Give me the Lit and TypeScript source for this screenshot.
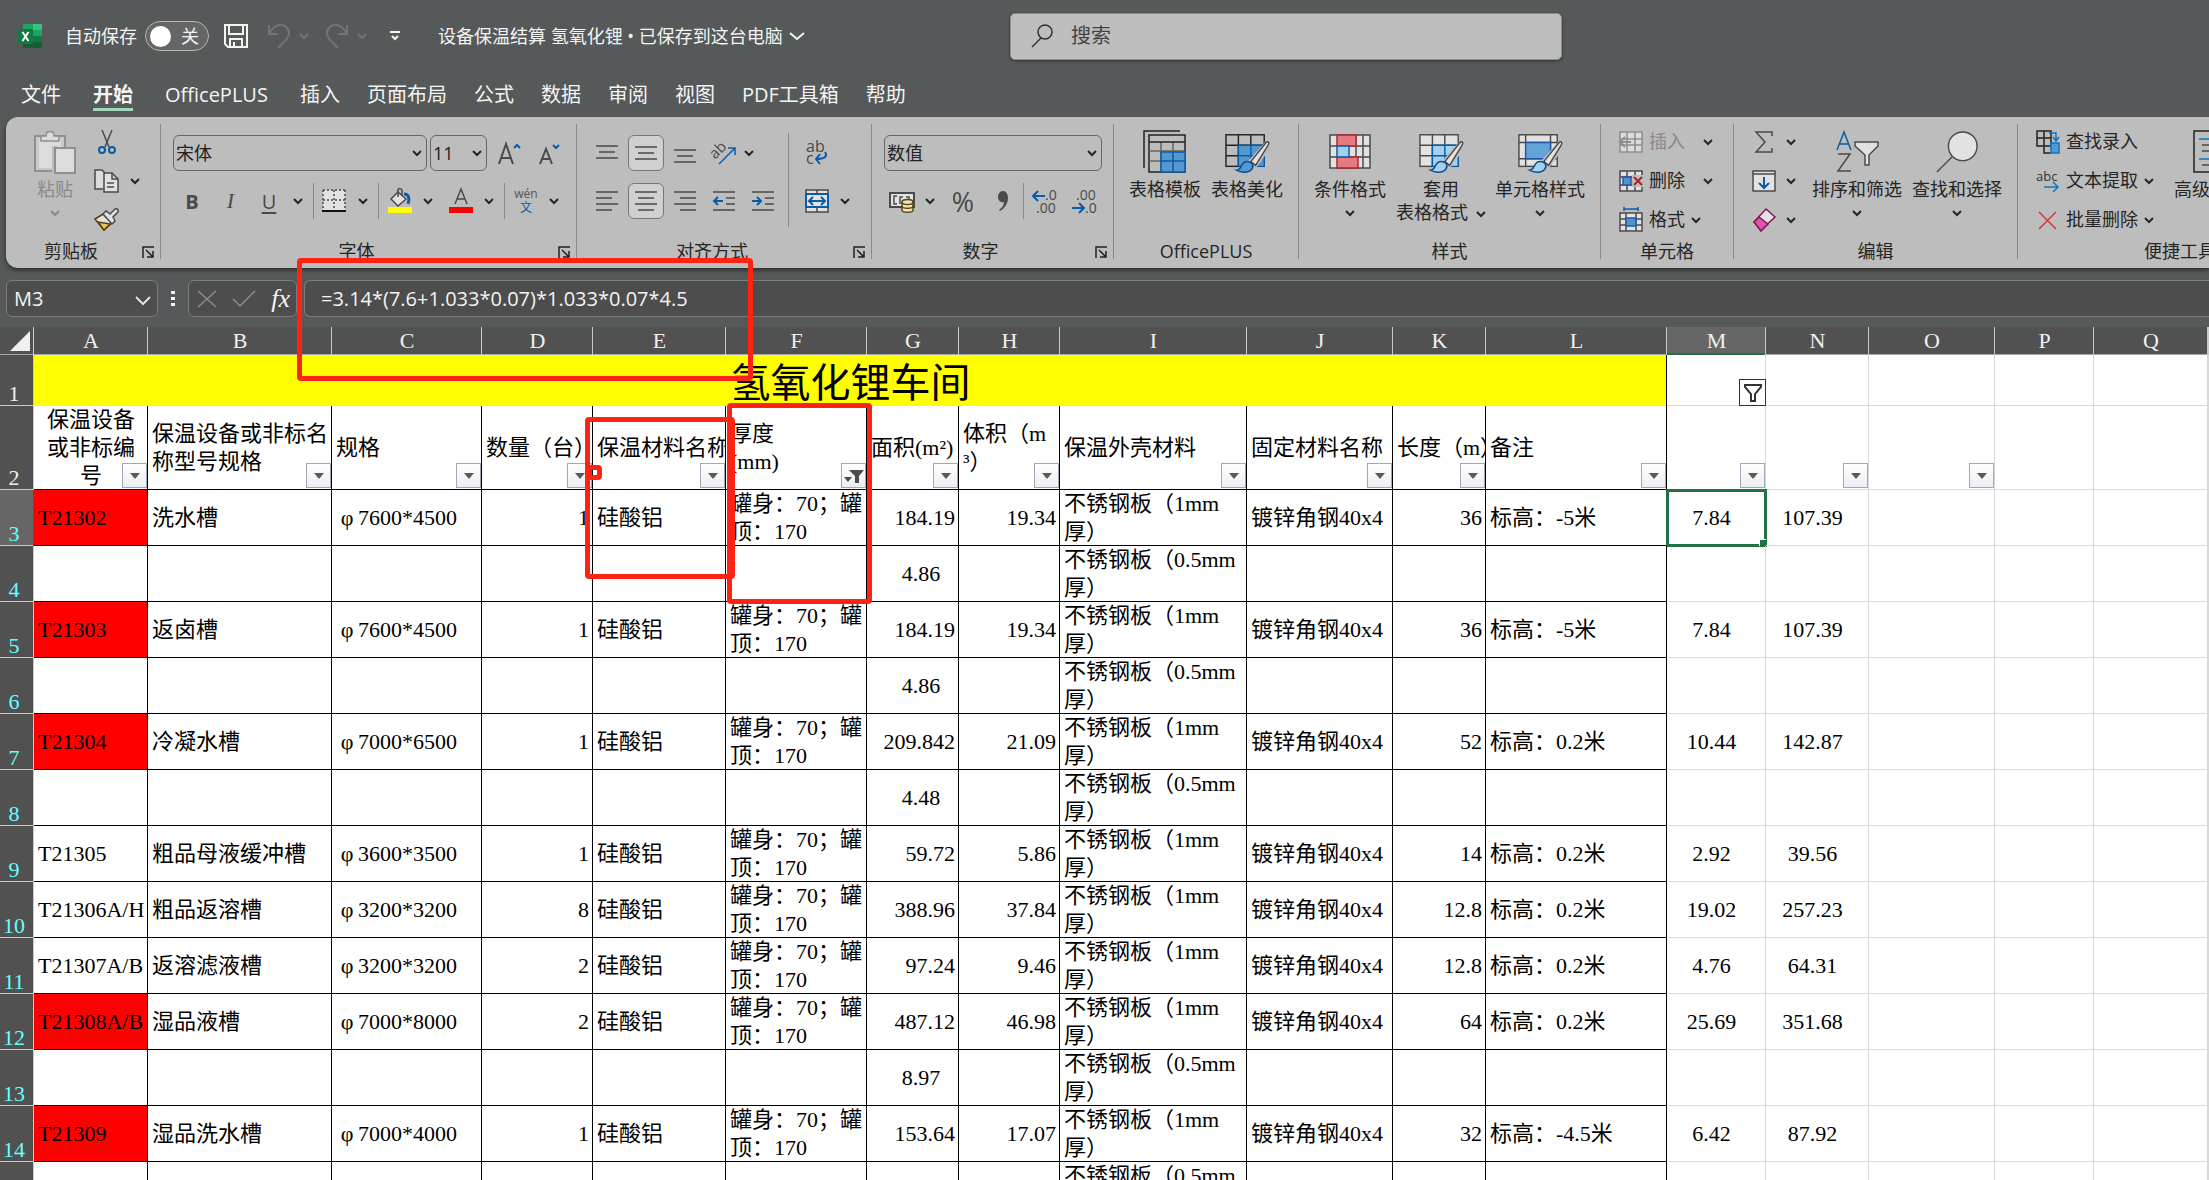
import { LitElement, html, css, svg, nothing } from "lit";
import { customElement } from "lit/decorators.js";
import { classMap } from "lit/directives/class-map.js";

const chev = html`<svg class="chev" width="10" height="6" viewBox="0 0 10 6" aria-hidden="true"><path d="M1 1l4 4 4-4" fill="none" stroke="currentColor" stroke-width="2"/></svg>`;

const icon = (w: number, h: number, body: unknown) =>
  html`<svg width=${w} height=${h} viewBox="0 0 ${w} ${h}" fill="none" stroke="#4a4a4a" stroke-width="1.5" aria-hidden="true">${body}</svg>`;

const lines = (rows: number[][]) => svg`${rows.map(([x1, x2, y]) => svg`<path d="M${x1} ${y}H${x2}"/>`)}`;

const brush = (fill: string) => svg`
  <path d="M45 13L26 34l4 5 15-21z" stroke="#bdbdbd" stroke-width="5"/>
  <path d="M43 13c2-2 4 0 2 3L32 37l-5-4z" fill="#e2e2e2"/>
  <path d="M12 42c6 0 4-9 11-9 5 0 8 4 5 8-3 4-11 4-16 1z" fill=${fill} stroke="#0a4f8c"/>`;

const grid42 = (fill: string, stroke: string) => svg`
  <rect x="1" y="5" width="40" height="33" fill=${fill} stroke=${stroke}/>
  <path d="M14 5v33M27 5v33M1 16h40M1 27h40" stroke=${stroke}/>`;

const I = {
  logo: html`<svg width="24" height="24" viewBox="0 0 24 24" aria-hidden="true">
    <path d="M5 0h10v12H5z" fill="#21a366"/><path d="M15 0h8a1 1 0 0 1 1 1v5h-9z" fill="#33c481"/>
    <path d="M5 6h10v6H5z" fill="#107c41"/><path d="M15 6h9v6h-9z" fill="#21a366"/>
    <path d="M5 12h10v12H5z" fill="#185c37"/><path d="M15 12h9v6h-9z" fill="#107c41"/><path d="M15 18h9v6h-9z" fill="#185c37"/>
    <rect x="0" y="5" width="15" height="15" rx="1" fill="#107c41"/>
    <path d="M4.500 8l6 9M10.500 8l-6 9" stroke="#fff" stroke-width="2"/></svg>`,
  save: html`<svg width="24" height="24" viewBox="0 0 24 24" fill="none" stroke="#f4f4f4" stroke-width="2" aria-hidden="true"><path d="M1 1h22v22H4l-3-3zM5 1v9h14V1M6 23v-8h12v8M10 18v5"/></svg>`,
  undo: html`<svg width="22" height="26" viewBox="0 0 22 26" fill="none" stroke="#717575" stroke-width="2" aria-hidden="true"><path d="M1 2v9h9M1 11C4 5 8 2 13 2c5 0 8 4 8 8 0 5-4 8-11 15"/></svg>`,
  redo: html`<svg width="22" height="26" viewBox="0 0 22 26" fill="none" stroke="#717575" stroke-width="2" aria-hidden="true"><path d="M21 2v9h-9M21 11C18 5 14 2 9 2c-5 0-8 4-8 8 0 5 4 8 11 15"/></svg>`,
  custom: html`<svg width="12" height="10" viewBox="0 0 12 10" fill="none" stroke="#f4f4f4" stroke-width="2" aria-hidden="true"><path d="M1 1h10M3 5l3 3 3-3"/></svg>`,
  wide: html`<svg width="16" height="9" viewBox="0 0 16 9" fill="none" stroke="#f4f4f4" stroke-width="2" aria-hidden="true"><path d="M1 1l7 6 7-6"/></svg>`,
  search: html`<svg width="22" height="24" viewBox="0 0 22 24" fill="none" stroke="#333" stroke-width="1.500" aria-hidden="true"><circle cx="14" cy="8" r="7"/><path d="M10 14l-9 9"/></svg>`,
  paste: icon(42, 44, svg`<g stroke="#8f8f8f" fill="#dcdcdc"><path d="M1 6h30v35H1z" fill="#c9c9c9" stroke-width="2"/><path d="M5 9h22v29H5z" stroke="none"/><path d="M7 11V6h5c0-6 8-6 8 0h5v5z"/><path d="M18 16h6v28h-6z" fill="#bdbdbd" stroke="none"/><path d="M21 18h20v25H21z" stroke-width="2"/></g>`),
  cut: icon(18, 24, svg`<path d="M4 0l7 17M14 0L7 17"/><circle cx="4" cy="20" r="3" stroke="#0a5ca8" stroke-width="2"/><circle cx="14" cy="20" r="3" stroke="#0a5ca8" stroke-width="2"/>`),
  copy: icon(26, 24, svg`<path d="M9 20H1V1h7l3 3" fill="#dcdcdc"/><path d="M10 4h8l6 6v13H10z" fill="#e2e2e2"/><path d="M18 4v6h6M13 14h7M13 18h7"/>`),
  painter: icon(26, 24, svg`<path d="M1 11l9 11 8-7-9-9z" fill="#e2e2e2" stroke="#5a4210"/><path d="M4 14l6 8 6-6z" fill="#f2c25a" stroke="#5a4210"/><path d="M9 6l3-3 4 3 5-5c2-1 4 1 3 3l-5 5 2 4-3 3z" fill="#e2e2e2"/>`),
  growA: icon(24, 24, svg`<path d="M2 23L9 3l7 20M4 17h10" stroke-width="2"/><path d="M17 7l3-3 3 3" stroke="#0a5ca8" stroke-width="2"/>`),
  shrinkA: icon(22, 24, svg`<path d="M2 23L8 8l6 15M4 18h8" stroke-width="2"/><path d="M15 4l3 3 3-3" stroke="#0a5ca8" stroke-width="2"/>`),
  border: icon(24, 24, svg`<path d="M1 1h22v20H1z" fill="#e2e2e2" stroke="none"/><path d="M1 1h22M1 1v20M23 1v20M12 1v20M1 11h22" stroke-dasharray="2 2"/><path d="M0 22h24" stroke="#111" stroke-width="2"/>`),
  fill: icon(26, 26, svg`<path d="M4 11l7-7 8 7-8 7z" fill="#e2e2e2"/><path d="M11 9V2c0-2 4-2 4 1v5"/><path d="M17 6c5 0 6 5 4 10" stroke="#0a5ca8" stroke-width="3"/><path d="M1 19h24v6H1z" fill="#ffff00" stroke="none"/>`),
  color: icon(26, 26, svg`<path d="M7 16l6-15 6 15M9 11h8"/><path d="M1 19h24v6H1z" fill="#ff0000" stroke="none"/>`),
  alTop: icon(22, 20, lines([[0, 22, 3], [3, 19, 9], [0, 22, 15]])),
  alMid: icon(22, 20, lines([[0, 22, 4], [3, 19, 10], [0, 22, 16]])),
  alBot: icon(22, 20, lines([[0, 22, 7], [3, 19, 13], [0, 22, 19]])),
  alL: icon(22, 22, lines([[0, 22, 2], [0, 16, 8], [0, 22, 14], [0, 16, 20]])),
  alC: icon(22, 22, lines([[0, 22, 2], [3, 19, 8], [0, 22, 14], [3, 19, 20]])),
  alR: icon(22, 22, lines([[0, 22, 2], [6, 22, 8], [0, 22, 14], [6, 22, 20]])),
  outd: icon(22, 22, svg`${lines([[0, 22, 2], [13, 22, 8], [13, 22, 14], [0, 22, 20]])}<path d="M10 11H1M5 7l-4 4 4 4" stroke="#0a5ca8" stroke-width="2"/>`),
  ind: icon(22, 22, svg`${lines([[0, 22, 2], [13, 22, 8], [13, 22, 14], [0, 22, 20]])}<path d="M0 11h9M5 7l4 4-4 4" stroke="#0a5ca8" stroke-width="2"/>`),
  orient: icon(26, 26, svg`<text x="2" y="19" transform="rotate(-45 4 17)" font-family="Open Sans" font-size="15" fill="#4a4a4a" stroke="none">ab</text><path d="M8 24L24 8M17 8h7v7" stroke="#0a5ca8"/>`),
  wrap: icon(24, 26, svg`<text x="1" y="12" font-family="Open Sans" font-size="16" fill="#4a4a4a" stroke="none">ab</text><text x="1" y="24" font-family="Open Sans" font-size="16" fill="#4a4a4a" stroke="none">c</text><path d="M20 12c3 5-1 7-9 7M15 14l-4 5 4 5" stroke="#0a5ca8" stroke-width="2"/>`),
  merge: icon(24, 24, svg`<path d="M1 1h22v22H1zM12 1v5M12 18v5" fill="#e2e2e2"/><path d="M1 5h22v13H1z" fill="#e2e2e2" stroke="#0a5ca8" stroke-width="2"/><path d="M4 12h16M8 8l-4 4 4 4M16 8l4 4-4 4" stroke="#0a5ca8" stroke-width="2"/>`),
  money: icon(26, 24, svg`<path d="M1 4h24v14H1z" fill="#e2e2e2" stroke-width="2"/><path d="M8 7H5v8h3M11 15V8h3M17 8h3v4"/><path d="M13 13v8c0 3 11 3 11 0v-8" fill="#f0e2c0" stroke="#5a4510"/><ellipse cx="18.500" cy="13" rx="5.500" ry="2.500" fill="#f0e2c0" stroke="#5a4510"/><path d="M13 17c0 3 11 3 11 0" stroke="#5a4510"/>`),
  comma: icon(12, 22, svg`<path d="M6 1c3 0 5 3 5 7 0 6-4 11-8 13l-1-1c3-2 5-5 5-8-4 1-6-2-6-5s2-6 5-6z" fill="#4a4a4a" stroke="none"/>`),
  inc: icon(26, 26, svg`<text x="14" y="12" font-family="Open Sans" font-size="14" fill="#4a4a4a" stroke="none">.0</text><text x="5" y="25" font-family="Open Sans" font-size="14" fill="#4a4a4a" stroke="none">.00</text><path d="M14 8H2M7 3L2 8l5 5" stroke="#0a5ca8" stroke-width="2"/>`),
  dec: icon(26, 26, svg`<text x="5" y="12" font-family="Open Sans" font-size="14" fill="#4a4a4a" stroke="none">.00</text><text x="14" y="25" font-family="Open Sans" font-size="14" fill="#4a4a4a" stroke="none">.0</text><path d="M1 20h12M8 15l5 5-5 5" stroke="#0a5ca8" stroke-width="2"/>`),
  tmpl: icon(44, 44, svg`<path d="M1 38V1h36" stroke="#222"/><path d="M6 5h36v37H6z" stroke="#222"/><path d="M18 12v30M30 12v30M6 21h36M6 31h36" stroke="#6a625c"/><path d="M6 12h36" stroke="#222"/><path d="M18 22h24v20H18z" fill="#5597cf" stroke="#0a5ca8"/><path d="M30 22v20M18 31h24" stroke="#0a5ca8"/>`),
  beaut: icon(46, 46, svg`${grid42("none", "#222")}<path d="M14 16h27v22H14z" fill="#5597cf" stroke="#0a5ca8"/><path d="M27 16v22M14 27h27" stroke="#0a5ca8"/>${brush("#5597cf")}`),
  cond: icon(42, 44, svg`<g>${grid42("#e2e2e2", "#4a4a4a")}<path d="M34 5v33" /><path d="M8 5h19v11H8zM8 27h21v11H8z" fill="#e47b80" stroke="#a8282e"/><path d="M8 16h12v11H8z" fill="#a4d0f2" stroke="#0a5ca8"/></g>`),
  tfmt: icon(46, 46, svg`${grid42("#e2e2e2", "#4a4a4a")}<path d="M14 16h27v22H14z" fill="#a4d0f2" stroke="#0a5ca8"/><path d="M27 16v22M14 27h27" stroke="#0a5ca8"/>${brush("#a4d0f2")}`),
  cstyle: icon(46, 46, svg`<rect x="1" y="5" width="40" height="33" fill="#e2e2e2"/><path d="M8 5v33M34 5v33M1 13h40M1 30h40"/><path d="M8 13h26v17H8z" fill="#62a3d8" stroke="#2a55a8"/>${brush("#a4d0f2")}`),
  ins: icon(24, 24, svg`<g stroke="#8e8e8e"><path d="M1 2h22v20H1zM8 2v20M16 2v20M1 9h22M1 15h22" fill="#dcdcdc"/><path d="M0 12h12M6 7l-5 5 5 5" stroke-width="2"/></g>`),
  del: icon(24, 24, svg`<path d="M1 2h22v20H1zM8 2v20M16 2v20M1 8h22M1 16h22" fill="#e2e2e2"/><path d="M4 8h8v8H4z" fill="#4f94cf" stroke="#2a55a8"/><path d="M13 6h11v12H13z" fill="#bdbdbd" stroke="none"/><path d="M15 8l8 8M23 8l-8 8" stroke="#b02020" stroke-width="2"/>`),
  fmt: icon(24, 26, svg`<path d="M1 6h22v18H1zM7 6v18M17 6v18M1 12h22M1 18h22" fill="#e2e2e2"/><path d="M7 11h10v8H7z" fill="#4f94cf" stroke="#2a55a8"/><path d="M5 2h14M5 0v4M19 0v4" stroke="#0a5ca8"/>`),
  sum: icon(24, 24, svg`<path d="M20 6V2H4l9 10-9 10h16v-4"/>`),
  down: icon(24, 24, svg`<path d="M1 2h22v20H1z" fill="#e2e2e2"/><path d="M1 5h22"/><path d="M12 8v11M7 14l5 5 5-5" stroke="#0a5ca8" stroke-width="2"/>`),
  erase: icon(24, 26, svg`<path d="M2 15L14 2l9 8L9 23z" fill="#e6e0e4" stroke="#7d1a55"/><path d="M2 15l5-5 9 7-7 7z" fill="#dd55aa" stroke="#7d1a55"/>`),
  sort: icon(44, 44, svg`<path d="M2 20L9 2l7 18M4 14h10" stroke="#0a5ca8"/><path d="M3 24h12L3 41h13"/><path d="M20 12h23v4l-9 9v10h-4V25l-10-9z" fill="#e2e2e2"/>`),
  find: icon(46, 46, svg`<circle cx="29" cy="17" r="15" fill="#e2e2e2"/><path d="M18 28L2 44"/>`),
  lookup: icon(24, 24, svg`<path d="M1 1h14v15H1zM8 1v15M1 8h14M8 16v7h7" stroke="#222"/><path d="M13 3h7v7M17 7l3 4 3-4" stroke="#0a77c8"/><path d="M15 13h8v10h-8z" fill="#5597cf" stroke="#0a77c8"/>`),
  text: icon(24, 24, svg`<text x="0" y="12" font-family="Open Sans" font-size="13" fill="#333" stroke="none">abc</text><path d="M8 18h14M17 13l5 5-5 5" stroke="#0a77c8"/>`),
  batch: icon(24, 24, svg`<path d="M3 4l17 17M20 4L3 21" stroke="#e03030"/>`),
  adv: icon(44, 44, svg`<path d="M1 1h30v41H1z" stroke="#222"/><path d="M6 9h20M6 29h20" stroke="#0a77c8"/><path d="M9 15h18M9 21h18M9 35h18"/>`),
  launch: icon(12, 12, svg`<path d="M1 12V1h11" stroke="#222"/><path d="M4 4l7 7M11 5v6H5" stroke="#222"/>`),
};

type Row = { n: number; a: string; red?: boolean; b?: string; c?: string; d?: string; g: string; h?: string; i: string; k?: string; l?: string; m?: string; nn?: string };
const sub = (n: number, g: string): Row => ({ n, a: "", g, i: "不锈钢板（0.5mm\n厚）" });
const main = (n: number, a: string, red: boolean, b: string, c: string, d: string, g: string, h: string, k: string, l: string, m: string, nn: string): Row =>
  ({ n, a, red, b, c, d, g, h, i: "不锈钢板（1mm\n厚）", k, l: "标高：" + l + "米", m, nn });

const ROWS: Row[] = [
  main(3, "T21302", true, "洗水槽", "7600*4500", "1", "184.19", "19.34", "36", "-5", "7.84", "107.39"),
  sub(4, "4.86"),
  main(5, "T21303", true, "返卤槽", "7600*4500", "1", "184.19", "19.34", "36", "-5", "7.84", "107.39"),
  sub(6, "4.86"),
  main(7, "T21304", true, "冷凝水槽", "7000*6500", "1", "209.842", "21.09", "52", "0.2", "10.44", "142.87"),
  sub(8, "4.48"),
  main(9, "T21305", false, "粗品母液缓冲槽", "3600*3500", "1", "59.72", "5.86", "14", "0.2", "2.92", "39.56"),
  main(10, "T21306A/H", false, "粗品返溶槽", "3200*3200", "8", "388.96", "37.84", "12.8", "0.2", "19.02", "257.23"),
  main(11, "T21307A/B", false, "返溶滤液槽", "3200*3200", "2", "97.24", "9.46", "12.8", "0.2", "4.76", "64.31"),
  main(12, "T21308A/B", true, "湿品液槽", "7000*8000", "2", "487.12", "46.98", "64", "0.2", "25.69", "351.68"),
  sub(13, "8.97"),
  main(14, "T21309", true, "湿品洗水槽", "7000*4000", "1", "153.64", "17.07", "32", "-4.5", "6.42", "87.92"),
  sub(15, ""),
];

const HEADS = ["保温设备\n或非标编\n号", "保温设备或非标名\n称型号规格", "规格", "数量（台）", "保温材料名称", "厚度\n(mm)", "面积(m²)", "体积（m\n³）", "保温外壳材料", "固定材料名称", "长度（m）", "备注"];
const COLS = "ABCDEFGHIJKLMNOPQ".split("");
const WIDTHS = [34, 114, 184, 150, 111, 133, 141, 92, 101, 187, 146, 93, 181, 99, 103, 126, 99, 114];

@customElement("xl-titlebar")
class XlTitlebar extends LitElement {
  static styles = css`
    :host { display: block; color: #f4f4f4; font: 18px/24px "Open Sans", "Noto Sans CJK SC", sans-serif; }
    button { all: unset; display: flex; align-items: center; cursor: pointer; }
    .bar { display: grid; grid-template-columns: 1010px 552px 1fr; align-items: center; height: 72px; }
    .left { display: flex; align-items: center; padding-left: 18px; }
    .auto { display: flex; align-items: center; gap: 8px; margin-left: 23px; }
    .switch { display: flex; align-items: center; gap: 10px; width: 64px; height: 30px; box-sizing: border-box; border: 1px solid #b4b4b4; border-radius: 15px; background: #666; padding-left: 4px; }
    .knob { width: 21px; height: 21px; border-radius: 50%; background: #fff; }
    .save { margin-left: 15px; }
    .undo { margin-left: 20px; gap: 9px; color: #717575; }
    .redo { margin-left: 17px; gap: 9px; color: #717575; }
    .custom { margin-left: 22px; }
    .doc { margin-left: 37px; gap: 6px; white-space: nowrap; }
    .search { display: flex; align-items: center; gap: 18px; height: 47px; box-sizing: border-box; padding-left: 20px; background: #bebebe; border: 1px solid #8e8e8e; border-radius: 5px; box-shadow: 0 1px 3px #333; }
    .search input { all: unset; flex: 1; color: #333; font-size: 20px; }
    .search input::placeholder { color: #444; opacity: 1; }
    .tabs { display: flex; gap: 27px; height: 45px; padding: 10px 0 0 21px; box-sizing: border-box; font-size: 20px; line-height: 26px; }
    .tab { border-bottom: 3px solid transparent; height: 26px; white-space: nowrap; }
    .wide { margin-right: 5px; }
    .on { font-weight: 700; border-color: #a3d9bb; }
  `;
  render() {
    const tabs = ["文件", "开始", "OfficePLUS", "插入", "页面布局", "公式", "数据", "审阅", "视图", "PDF工具箱", "帮助"];
    return html`
      <header class="bar">
        <div class="left">
          ${I.logo}
          <div class="auto"><span id="as">自动保存</span>
            <button class="switch" role="switch" aria-checked="false" aria-labelledby="as"><span class="knob"></span>关</button></div>
          <button class="save" aria-label="保存">${I.save}</button>
          <button class="undo" aria-label="撤消">${I.undo}${chev}</button>
          <button class="redo" aria-label="恢复">${I.redo}${chev}</button>
          <button class="custom" aria-label="自定义">${I.custom}</button>
          <button class="doc">设备保温结算 氢氧化锂 • 已保存到这台电脑${I.wide}</button>
        </div>
        <label class="search">${I.search}<input type="text" placeholder="搜索" aria-label="搜索"></label>
      </header>
      <nav class="tabs">${tabs.map((t, i) => html`<button class=${classMap({ tab: true, wide: i < 3, on: i === 1 })}>${t}</button>`)}</nav>`;
  }
}

@customElement("xl-ribbon")
class XlRibbon extends LitElement {
  static styles = css`
    :host { display: block; padding-left: 6px; overflow: hidden; height: 159px; margin-bottom: -8px; color: #262626; font: 18px/23px "Open Sans", "Noto Sans CJK SC", sans-serif; }
    button { all: unset; display: flex; align-items: center; justify-content: center; cursor: pointer; white-space: nowrap; }
    svg { flex: none; overflow: visible; }
    .ribbon { display: flex; height: 151px; background: #bdbdbd; border-radius: 12px 0 0 12px; box-shadow: 0 2px 4px #2a2a2a; overflow: hidden; }
    .rule { flex: none; width: 1px; background: #8a8a8a; margin: 7px 0 9px; }
    .group { flex: none; display: flex; flex-direction: column; box-sizing: border-box; padding-bottom: 5px; }
    .body { display: flex; height: 122px; }
    .foot { display: grid; grid-template-columns: 1fr; height: 24px; align-items: center; text-align: center; }
    .foot.has { grid-template-columns: 1fr 24px; }
    .foot span { white-space: nowrap; }
    .foot svg { margin-top: 2px; }
    .clip { width: 154px; } .font { width: 415px; } .align { width: 294px; } .num { width: 241px; } .plus { width: 184px; }
    .style { width: 301px; } .cells { width: 132px; } .edit { width: 283px; } .quick { width: 324px; }
    .two { display: grid; grid-template-rows: 36px 36px; row-gap: 12px; padding-top: 18px; align-content: start; }
    .three { display: grid; grid-template-rows: 39px 39px 39px; padding-top: 5px; align-content: start; justify-items: start; }
    .line { display: grid; justify-items: center; align-items: center; }
    .mini { background: #8a8a8a; width: 1px; height: 36px; }
    .tall { background: #8a8a8a; width: 1px; height: 94px; margin: 16px 0 0 6px; }
    .drop { display: flex; align-items: center; box-sizing: border-box; height: 36px; border: 1px solid #666; border-radius: 6px; padding: 0 4px 0 2px; width: 100%; }
    .drop select { all: unset; flex: 1; min-width: 0; color: #222; }
    .sel { background: #d0d0d0; border: 1px solid #777; border-radius: 6px; width: 34px; height: 34px; }
    .big { flex-direction: column; justify-content: flex-start; padding-top: 13px; text-align: center; }
    .big > svg:first-child { margin-bottom: 4px; height: 44px; }
    .big .chev { margin-top: 9px; }
    .big span .chev { margin: 0 0 2px 8px; }
    .dim { color: #8a8a8a; }
    .clip .big { width: 74px; padding-left: 12px; }
    .clip .three .line { grid-template-columns: 30px 26px; }
    .font .two { padding-left: 12px; }
    .f1 { grid-template-columns: 254px 57px 38px 36px; column-gap: 3px; justify-content: start; }
    .f2 { grid-template-columns: 38px 39px 38px 20px 10px 32px 26px 4px 40px 16px 49px 8px 23px 20px 36px; }
    .b { font-weight: 700; font-size: 20px; color: #4a4a4a; } .i { font: italic 22px "Liberation Serif", serif; color: #4a4a4a; } .u { text-decoration: underline; font-size: 20px; color: #4a4a4a; text-underline-offset: 3px; }
    .py { display: flex; flex-direction: column; align-items: center; font-size: 12px; line-height: 14px; color: #555; } .py b { font-weight: 400; color: #0a5ca8; }
    .align .two { padding-left: 11px; }
    .a1 { grid-template-columns: 38px 39px 39px 40px 10px; } .a2 { grid-template-columns: 38px 39px 39px 40px 38px; }
    .align .wrapm { padding-left: 13px; } .wrapm .line { grid-template-columns: 30px 26px; }
    .num .two { padding-left: 12px; } .n1 { grid-template-columns: 218px; } .n2 { grid-template-columns: 36px 20px 46px 33px 9px 32px 47px; }
    .pct { font-size: 27px; color: #4a4a4a; }
    .plus .body { padding-left: 10px; } .plus .big { width: 82px; }
    .style .body { padding-left: 11px; } .w80 { width: 80px; } .w102 { width: 102px; } .w96 { width: 96px; }
    .cells .three, .edit .three, .quick .three { padding-left: 18px; }
    .row { gap: 6px; } .row .far { margin-left: 12px; display: flex; } .blk { color: #262626; }
    .edit .three { width: 59px; } .edit .row { gap: 10px; } .w92 { width: 92px; } .w108 { width: 108px; }
    .quick .three { width: 138px; } .adv { align-items: flex-start; } .adv > svg:first-child { margin-left: 19px; }
  `;
  private group(cls: string, label: string, body: unknown, launcher = false) {
    return html`<section class="group ${cls}"><div class="body">${body}</div>
      <div class=${launcher ? "foot has" : "foot"}><span>${label}</span>${launcher ? html`<button aria-label="${label}设置">${I.launch}</button>` : nothing}</div></section>`;
  }
  private ib(ic: unknown, label: string, cls = "") {
    return html`<button class=${cls} aria-label=${label}>${ic}</button>`;
  }
  render() {
    const c = (l = "更多") => this.ib(chev, l);
    const bar = html`<span class="rule"></span>`;
    const mini = html`<span class="mini"></span>`;
    return html`<div class="ribbon">
      ${this.group("clip", "剪贴板", html`
        <button class="big dim">${I.paste}<span>粘贴</span>${chev}</button>
        <div class="three">
          <div class="line">${this.ib(I.cut, "剪切")}</div>
          <div class="line">${this.ib(I.copy, "复制")}${c()}</div>
          <div class="line">${this.ib(I.painter, "格式刷")}</div>
        </div>`, true)}${bar}
      ${this.group("font", "字体", html`<div class="two">
        <div class="line f1">
          <label class="drop"><select aria-label="字体"><option>宋体</option></select>${chev}</label>
          <label class="drop"><select aria-label="字号"><option>11</option></select>${chev}</label>
          ${this.ib(I.growA, "增大字号")}${this.ib(I.shrinkA, "减小字号")}
        </div>
        <div class="line f2">
          <button class="b">B</button><button class="i">I</button><button class="u">U</button>${c()}${mini}
          ${this.ib(I.border, "边框")}${c()}${mini}${this.ib(I.fill, "填充颜色")}${c()}${this.ib(I.color, "字体颜色")}${c()}${mini}
          <button class="py"><span>wén</span><b>文</b></button>${c()}
        </div></div>`, true)}${bar}
      ${this.group("align", "对齐方式", html`
        <div class="two">
          <div class="line a1">${this.ib(I.alTop, "顶端对齐")}${this.ib(I.alMid, "垂直居中", "sel")}${this.ib(I.alBot, "底端对齐")}${this.ib(I.orient, "方向")}${c()}</div>
          <div class="line a2">${this.ib(I.alL, "左对齐")}${this.ib(I.alC, "居中", "sel")}${this.ib(I.alR, "右对齐")}${this.ib(I.outd, "减少缩进量")}${this.ib(I.ind, "增加缩进量")}</div>
        </div><span class="tall"></span>
        <div class="two wrapm">
          <div class="line">${this.ib(I.wrap, "自动换行")}</div>
          <div class="line">${this.ib(I.merge, "合并后居中")}${c()}</div>
        </div>`, true)}${bar}
      ${this.group("num", "数字", html`<div class="two">
        <div class="line n1"><label class="drop"><select aria-label="数字格式"><option>数值</option></select>${chev}</label></div>
        <div class="line n2">${this.ib(I.money, "会计数字格式")}${c()}<button class="pct">%</button>${this.ib(I.comma, "千位分隔")}${mini}${this.ib(I.inc, "增加小数位数")}${this.ib(I.dec, "减少小数位数")}</div>
        </div>`, true)}${bar}
      ${this.group("plus", "OfficePLUS", html`
        <button class="big">${I.tmpl}<span>表格模板</span></button><button class="big">${I.beaut}<span>表格美化</span></button>`)}${bar}
      ${this.group("style", "样式", html`
        <button class="big w80">${I.cond}<span>条件格式</span>${chev}</button>
        <button class="big w102">${I.tfmt}<span>套用</span><span>表格格式${chev}</span></button>
        <button class="big w96">${I.cstyle}<span>单元格样式</span>${chev}</button>`)}${bar}
      ${this.group("cells", "单元格", html`<div class="three">
        <button class="row dim">${I.ins}插入<span class="far blk">${chev}</span></button>
        <button class="row">${I.del}删除<span class="far">${chev}</span></button>
        <button class="row">${I.fmt}格式${chev}</button></div>`)}${bar}
      ${this.group("edit", "编辑", html`<div class="three">
        <button class="row" aria-label="自动求和">${I.sum}${chev}</button><button class="row" aria-label="填充">${I.down}${chev}</button><button class="row" aria-label="清除">${I.erase}${chev}</button></div>
        <button class="big w92">${I.sort}<span>排序和筛选</span>${chev}</button>
        <button class="big w108">${I.find}<span>查找和选择</span>${chev}</button>`)}${bar}
      ${this.group("quick", "便捷工具", html`<div class="three">
        <button class="row">${I.lookup}查找录入</button><button class="row">${I.text}文本提取${chev}</button><button class="row">${I.batch}批量删除${chev}</button></div>
        <button class="big adv">${I.adv}<span>高级</span></button>`)}
    </div>`;
  }
}

@customElement("xl-formula")
class XlFormula extends LitElement {
  static styles = css`
    :host { display: flex; align-items: center; height: 59px; padding: 2px 0 0 6px; box-sizing: border-box; color: #f4f4f4; font: 20px/26px "Open Sans", "Noto Sans CJK SC", sans-serif; }
    input, button { all: unset; }
    .box { display: flex; align-items: center; height: 37px; box-sizing: border-box; background: #4d4d4d; border: 1px solid #7c7c7c; border-radius: 6px; }
    .name { width: 152px; padding: 0 6px 0 7px; }
    .name input { flex: 1; min-width: 0; }
    .dots { width: 30px; display: flex; justify-content: center; }
    .acts { width: 109px; justify-content: space-between; padding: 0 6px 0 8px; margin-right: 7px; }
    .acts button { display: flex; }
    .acts .fx { font: italic 26px/28px "Liberation Serif", serif; }
    .formula { flex: 1; border-right: 0; border-radius: 6px 0 0 6px; padding-left: 16px; }
    .formula input { flex: 1; }
  `;
  render() {
    return html`
      <div class="box name"><input aria-label="名称框" .value=${"M3"}><button aria-label="展开名称"><svg width="16" height="10" viewBox="0 0 16 10" fill="none" stroke="#e0e0e0" stroke-width="2"><path d="M1 1l7 7 7-7"/></svg></button></div>
      <span class="dots"><svg width="4" height="16" viewBox="0 0 4 16" fill="#f4f4f4"><path d="M0 0h4v3H0zM0 6h4v3H0zM0 12h4v3H0z"/></svg></span>
      <div class="box acts">
        <button aria-label="取消"><svg width="20" height="18" viewBox="0 0 20 18" fill="none" stroke="#8c8c8c" stroke-width="1.500"><path d="M1 1l18 16M19 1L1 17"/></svg></button>
        <button aria-label="输入"><svg width="24" height="18" viewBox="0 0 24 18" fill="none" stroke="#8c8c8c" stroke-width="1.500"><path d="M1 9l7 7L23 1"/></svg></button>
        <button class="fx" aria-label="插入函数">fx</button>
      </div>
      <div class="box formula"><input aria-label="编辑栏" .value=${"=3.14*(7.6+1.033*0.07)*1.033*0.07*4.5"}></div>`;
  }
}

@customElement("xl-sheet")
class XlSheet extends LitElement {
  static styles = css`
    :host { display: block; overflow: hidden; color: #000; font: 22px/28px "Liberation Serif", "Noto Sans CJK SC", serif; background: #fff; }
    table { table-layout: fixed; border-collapse: separate; border-spacing: 0; width: 100%; }
    th, td { --right: #d9d9d9; --below: #d9d9d9; box-sizing: border-box; padding: 0 4px; font-weight: 400; text-align: left; vertical-align: middle; white-space: pre; overflow: hidden; position: relative; box-shadow: inset -1px 0 0 var(--right), inset 0 -1px 0 var(--below); }
    thead th { height: 28px; padding: 0; text-align: center; background: #515151; color: #f0f0f0; --right: #c8c8c8; --below: #a8a8a8; }
    thead th.sel { background: #666; box-shadow: inset -1px 0 0 var(--right), inset 0 -2px 0 #217346; }
    .corner svg { display: block; margin: 0 0 0 10px; }
    .rn { background: #515151; color: #f0f0f0; text-align: center; vertical-align: bottom; padding: 0 6px 0 0; --right: #c8c8c8; --below: #c8c8c8; line-height: 24px; }
    .hit { color: #6ff; }
    .cur { background: #666; --right: #217346; }
    .r1 { height: 51px; } .r2 { height: 84px; } .r3 { height: 56px; }
    td.title { background: #ff0; text-align: center; font-size: 40px; line-height: 45px; padding-top: 6px; --right: #000; --below: #ff0; }
    .k { --right: #000; --below: #000; }
    .red { background: #f00; }
    .phi { display: inline-block; width: 22px; text-align: center; }
    .mid { text-align: center; }
    .r { text-align: right; }
    .part { text-align: center; padding-left: 20px; }
    .val { text-align: center; padding-right: 14px; }
    .active { outline: 3px solid #217346; outline-offset: -2px; }
    .grip { position: absolute; right: 0; bottom: 0; width: 6px; height: 6px; background: #217346; border: 1px solid #fff; border-width: 1px 0 0 1px; }
    .flt { all: unset; position: absolute; right: 1px; bottom: 2px; box-sizing: border-box; width: 25px; height: 25px; display: flex; align-items: center; justify-content: center; border: 1px solid #a3a9b4; background: linear-gradient(#fff, #eceef4); cursor: pointer; }
    .clear { all: unset; position: absolute; right: 0; bottom: 0; box-sizing: border-box; width: 27px; height: 27px; display: flex; align-items: center; justify-content: center; border: 1px solid #333; background: #fff; cursor: pointer; }
  `;
  private filter(active = false) {
    return html`<button class="flt" aria-label="筛选">${active
      ? html`<svg width="20" height="16" viewBox="0 0 20 16"><path d="M5 2h15l-5 6v7h-4V8zM0 9h8l-4 5z" fill="#4d4d4d"/></svg>`
      : html`<svg width="10" height="6" viewBox="0 0 10 6"><path d="M0 0h10L5 6z" fill="#5a5a5a"/></svg>`}</button>`;
  }
  private row(r: Row) {
    const f = !!r.b;
    return html`<tr class="r3"><th class=${classMap({ rn: true, hit: true, cur: r.n === 3 })} scope="row">${r.n}</th>
      <td class=${classMap({ k: true, red: !!r.red })}>${r.a}</td><td class="k">${r.b}</td><td class="k">${f ? html`<span class="phi">φ</span>${r.c}` : nothing}</td><td class="k r">${r.d}</td>
      <td class="k">${f ? "硅酸铝" : ""}</td><td class="k">${f ? "罐身：70；罐\n顶：170" : ""}</td>
      <td class=${f ? "k r" : "k part"}>${r.g}</td><td class="k r">${r.h}</td><td class="k">${r.i}</td><td class="k">${f ? "镀锌角钢40x4" : ""}</td>
      <td class="k r">${r.k}</td><td class="k">${r.l}</td>
      <td class=${classMap({ val: true, active: r.n === 3 })}>${r.m}${r.n === 3 ? html`<span class="grip"></span>` : nothing}</td><td class="val">${r.nn}</td><td></td><td></td><td></td><td></td></tr>`;
  }
  render() {
    return html`<table>
      <colgroup>${WIDTHS.map(w => html`<col style="width:${w}px">`)}<col></colgroup>
      <thead><tr><th class="corner" aria-label="全选"><svg width="20" height="20" viewBox="0 0 20 20"><path d="M20 0v20H0z" fill="#f0f0f0"/></svg></th>
        ${COLS.map(c => html`<th scope="col" class=${classMap({ sel: c === "M" })}>${c}</th>`)}<th></th></tr></thead>
      <tbody>
        <tr class="r1"><th class="rn" scope="row">1</th><td class="title" colspan="12">氢氧化锂车间</td>
          <td><button class="clear" aria-label="筛选选项"><svg width="20" height="20" viewBox="0 0 20 20" fill="none" stroke="#333" stroke-width="2"><path d="M2 2h16v2l-6 7v7H8v-7L2 4z"/></svg></button></td><td></td><td></td><td></td><td></td><td></td></tr>
        <tr class="r2"><th class="rn" scope="row">2</th>
          ${HEADS.map((h, i) => html`<td class=${classMap({ k: true, mid: i === 0 })}>${h}${this.filter(i === 5)}</td>`)}
          <td>${this.filter()}</td><td>${this.filter()}</td><td>${this.filter()}</td><td></td><td></td><td></td></tr>
        ${ROWS.map(r => this.row(r))}
      </tbody></table>`;
  }
}

@customElement("app-root")
class AppRoot extends LitElement {
  static styles = css`
    :host { display: block; }
    .app { position: relative; display: flex; flex-direction: column; height: 100vh; overflow: hidden; background: #555959; }
    xl-sheet { flex: 1; min-height: 0; }
    xl-titlebar, xl-ribbon, xl-formula { flex: none; }
    .mark { position: absolute; box-sizing: border-box; border: 5px solid #ff2315; border-radius: 4px; pointer-events: none; }
    .m1 { left: 297px; top: 258px; width: 456px; height: 123px; }
    .m2 { left: 585px; top: 417px; width: 150px; height: 162px; }
    .m3 { left: 727px; top: 403px; width: 145px; height: 201px; }
    .m4 { left: 587px; top: 465px; width: 15px; height: 15px; }
  `;
  render() {
    return html`<main class="app">
      <xl-titlebar></xl-titlebar><xl-ribbon></xl-ribbon><xl-formula></xl-formula><xl-sheet></xl-sheet>
      <span class="mark m1"></span><span class="mark m2"></span><span class="mark m3"></span><span class="mark m4"></span>
    </main>`;
  }
}
